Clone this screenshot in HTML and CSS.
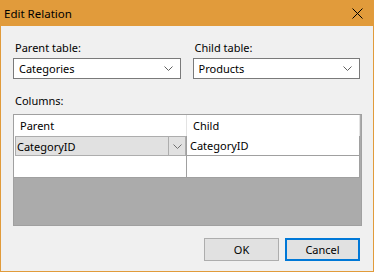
FILE: index.html
```html
<!DOCTYPE html>
<html lang="en">
<head>
  <meta charset="UTF-8" />
  <title>Edit Relation</title>
  <link rel="stylesheet" href="styles.css">
</head>
<body>

<div class="window">
  <div class="titlebar">
    <span class="title">Edit Relation</span>
    <svg class="close" width="11" height="11" viewBox="0 0 11 11">
      <path d="M0.5 0.5 L10.5 10.5 M10.5 0.5 L0.5 10.5" stroke="#000" stroke-width="1" />
    </svg>
  </div>

  <div class="content">
    <div class="tables">
      <div class="field">
        <label>Parent table:</label>
        <div class="combo">
          <span>Categories</span>
          <svg class="chevron" width="9" height="5" viewBox="0 0 9 5"><path d="M0.5 0.5 L4.5 4.5 L8.5 0.5" fill="none" stroke="#606060" /></svg>
        </div>
      </div>
      <div class="field">
        <label>Child table:</label>
        <div class="combo">
          <span>Products</span>
          <svg class="chevron" width="9" height="5" viewBox="0 0 9 5"><path d="M0.5 0.5 L4.5 4.5 L8.5 0.5" fill="none" stroke="#606060" /></svg>
        </div>
      </div>
    </div>

    <div class="columns-label">Columns:</div>

    <div class="grid">
      <div class="row header">
        <div class="cell">Parent</div>
        <div class="cell">Child</div>
      </div>
      <div class="row first">
        <div class="cell cell-combo">
          <div class="cell-select">
            <span>CategoryID</span>
            <span class="drop">
              <svg width="9" height="5" viewBox="0 0 9 5"><path d="M0.5 0.5 L4.5 4.5 L8.5 0.5" fill="none" stroke="#707070" /></svg>
            </span>
          </div>
        </div>
        <div class="cell">CategoryID</div>
      </div>
      <div class="row">
        <div class="cell"></div>
        <div class="cell"></div>
      </div>
    </div>

    <div class="buttons">
      <button type="button">OK</button>
      <button type="button" class="focused">Cancel</button>
    </div>
  </div>
</div>

</body>
</html>
```

FILE: styles.css
```css
body {
  margin: 0;
  font-family: 'Noto Sans', sans-serif;
  font-size: 11px;
  color: #000;
}
.window {
  width: 374px;
  height: 272px;
  box-sizing: border-box;
  background: #e19b3b;
  padding: 0 1px 1px;
  display: flex;
  flex-direction: column;
}
.titlebar {
  height: 26px;
  display: flex;
  align-items: center;
  justify-content: space-between;
  padding: 0 10px 0 3px;
}
.title {
  font-size: 11.5px;
}
.content {
  flex: 1;
  background: #f0f0f0;
  padding: 14px 13px 0 12px;
}
.tables {
  display: flex;
  gap: 12px;
}
.field {
  width: 168px;
}
.field label {
  display: block;
  height: 16px;
  line-height: 16px;
  margin: 0 0 2px 2px;
}
.combo {
  height: 21px;
  box-sizing: border-box;
  border: 1px solid #7a7a7a;
  background: #fff;
  display: flex;
  align-items: center;
  justify-content: space-between;
  padding: 0 7px 0 5px;
}
.columns-label {
  height: 16px;
  line-height: 16px;
  margin: 14px 0 0 2px;
}
.grid {
  margin-top: 5px;
  width: 349px;
  height: 112px;
  box-sizing: border-box;
  border: 1px solid #a0a0a0;
  background: #ababab;
}
.row {
  width: 346px;
  height: 21px;
  display: grid;
  grid-template-columns: 173px 173px;
}
.row.first {
  height: 20px;
}
.row:last-child {
  height: 22px;
}
.cell {
  background: #fff;
  box-sizing: border-box;
  border-right: 1px solid #a0a0a0;
  border-bottom: 1px solid #a0a0a0;
  padding-left: 3px;
  line-height: 19px;
}
.header .cell {
  border-right-color: #e3e3e3;
  border-bottom: none;
  padding-left: 6px;
  line-height: 21px;
}
.cell-combo {
  padding: 0 0 0 1px;
  border-bottom: none;
}
.cell-select {
  height: 20px;
  box-sizing: border-box;
  background: #e1e1e1;
  border: 1px solid #adadad;
  display: flex;
  align-items: center;
  justify-content: space-between;
  padding-left: 1px;
}
.drop {
  width: 16px;
  height: 100%;
  border-left: 1px solid #adadad;
  display: flex;
  align-items: center;
  justify-content: center;
}
.buttons {
  display: flex;
  justify-content: flex-end;
  gap: 6px;
  margin-top: 12px;
}
.buttons button {
  width: 75px;
  height: 23px;
  box-sizing: border-box;
  border: 1px solid #adadad;
  background: #e1e1e1;
  font-family: 'Noto Sans', sans-serif;
  font-size: 11px;
  color: #000;
  padding: 0;
}
.buttons button.focused {
  border: 2px solid #0078d7;
}
```
